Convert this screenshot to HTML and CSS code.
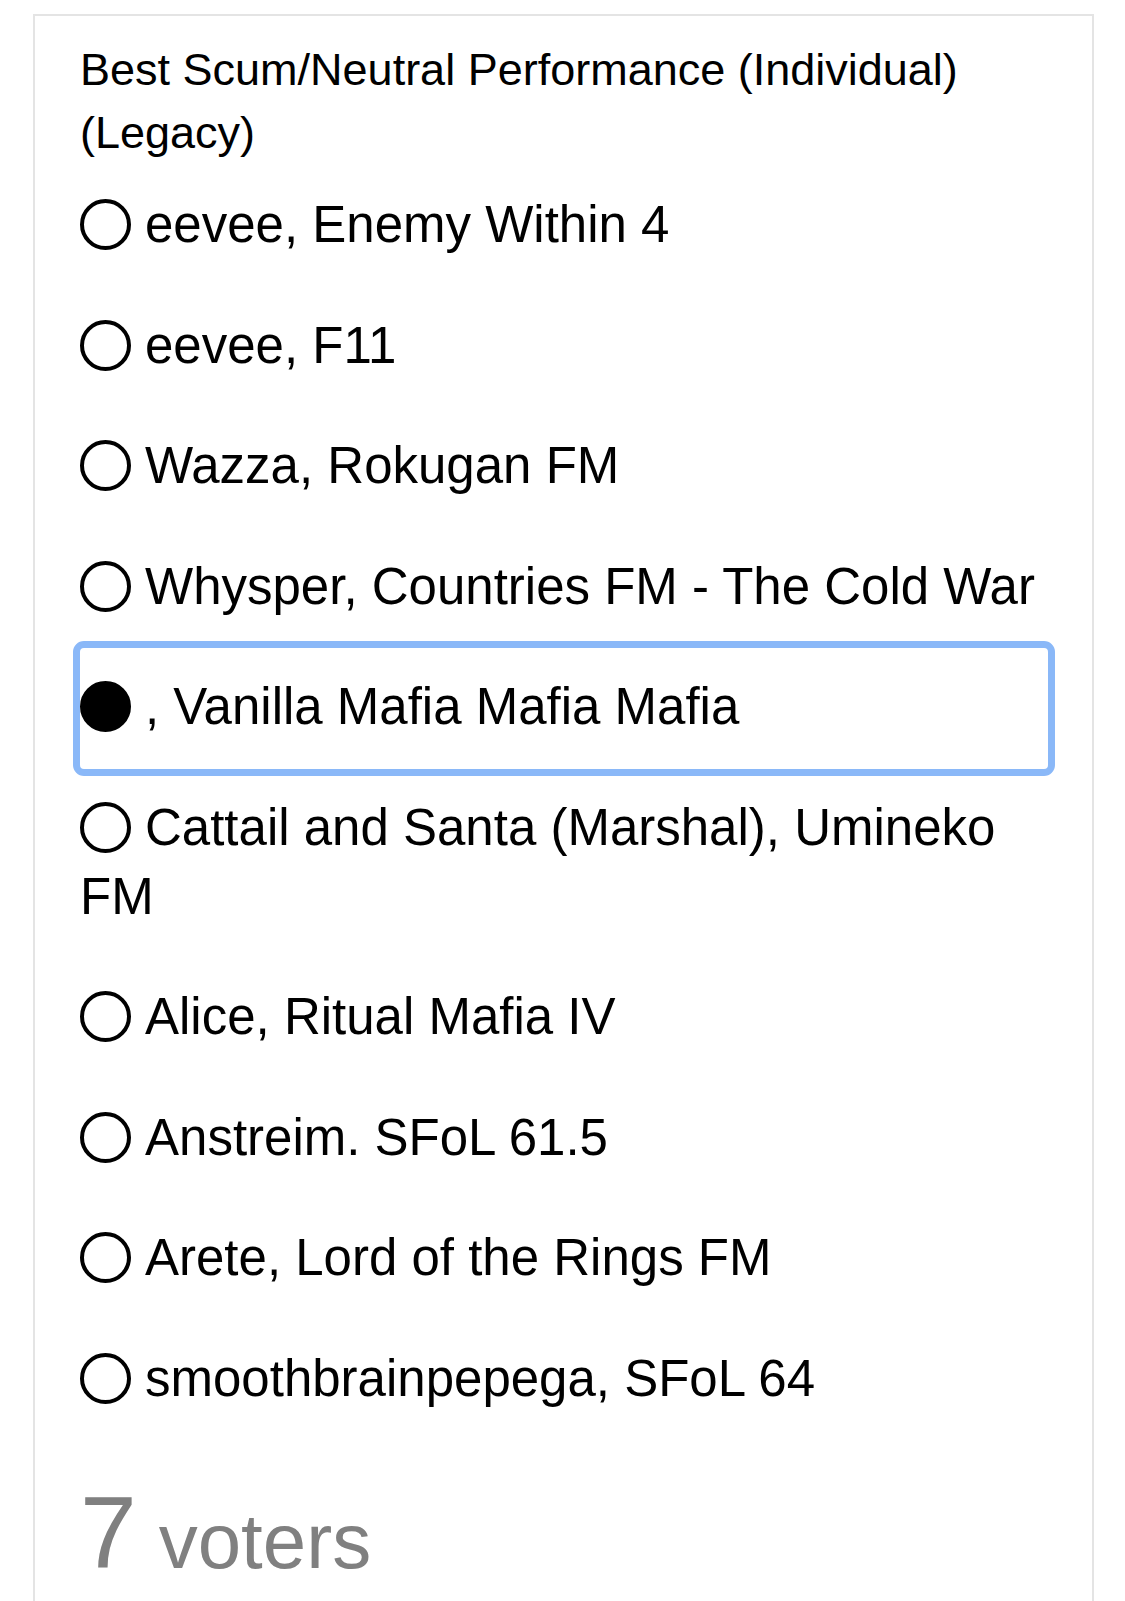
FILE: index.html
```html
<!DOCTYPE html>
<html lang="en">
<head>
    <meta charset="UTF-8">
    <meta name="viewport" content="width=device-width, initial-scale=1.0">
    <title>Poll</title>
    <link rel="stylesheet" href="styles.css">
</head>
<body>
    <div class="poll">
        <div class="poll-title">Best Scum/Neutral Performance (Individual) (Legacy)</div>

        <div class="options">
            <div class="option"><span class="radio"></span>eevee, Enemy Within 4</div>
            <div class="option"><span class="radio"></span>eevee, F11</div>
            <div class="option"><span class="radio"></span>Wazza, Rokugan FM</div>
            <div class="option"><span class="radio"></span>Whysper, Countries FM - The Cold War</div>
            <div class="option focused"><span class="radio checked"></span>, Vanilla Mafia Mafia Mafia</div>
            <div class="option"><span class="radio"></span>Cattail and Santa (Marshal), Umineko FM</div>
            <div class="option"><span class="radio"></span>Alice, Ritual Mafia IV</div>
            <div class="option"><span class="radio"></span>Anstreim. SFoL 61.5</div>
            <div class="option"><span class="radio"></span>Arete, Lord of the Rings FM</div>
            <div class="option"><span class="radio"></span>smoothbrainpepega, SFoL 64</div>
        </div>

        <div class="voters">7<span class="voters-label">voters</span></div>
    </div>
</body>
</html>
```

FILE: styles.css
```css
* {
    margin: 0;
    padding: 0;
    box-sizing: border-box;
    font-family: "Liberation Sans", Arial, sans-serif;
}

body {
    background: #ffffff;
    color: #000;
    padding: 14px 31px 0 33px;
}

.poll {
    border: 2px solid #e4e4e4;
    border-bottom: none;
    padding: 22px 44px 200px 45px;
}

.poll-title {
    font-size: 45px;
    line-height: 63px;
}

.options {
    margin-top: 2px;
}

.option {
    font-size: 51px;
    line-height: 69px;
    padding: 24px 0 27.5px;
}

.option.focused {
    outline: 7px solid #8ab8f8;
    border-radius: 4px;
}

.radio {
    display: inline-block;
    width: 51px;
    height: 51px;
    margin-right: 14px;
    border: 4px solid #000;
    border-radius: 50%;
    vertical-align: -8px;
}

.radio.checked {
    background: #000;
}

.voters {
    color: #808080;
    font-size: 102px;
    line-height: 120px;
    margin-top: 33px;
}

.voters-label {
    font-size: 78px;
    margin-left: 22px;
}
```
